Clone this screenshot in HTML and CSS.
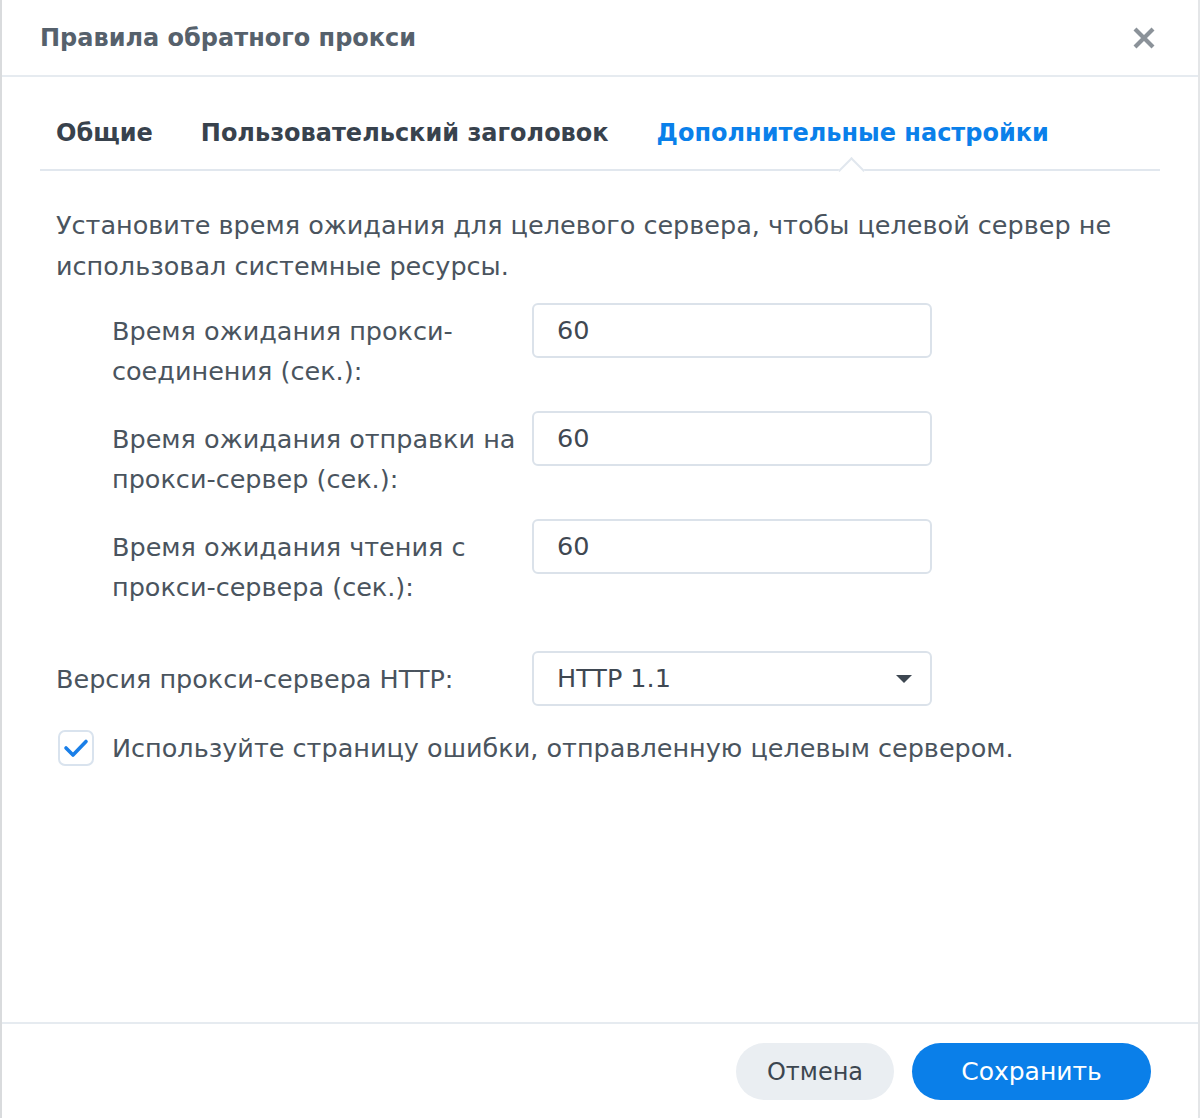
FILE: index.html
```html
<!DOCTYPE html>
<html lang="ru">
<head>
<meta charset="utf-8">
<title>Правила обратного прокси</title>
<link rel="stylesheet" href="styles.css">
</head>
<body>
<div class="dialog">
  <div class="header">
    <div class="title">Правила обратного прокси</div>
    <svg class="close" width="24" height="24" viewBox="0 0 24 24"><path d="M3 3 L21 21 M21 3 L3 21" stroke="#8b9299" stroke-width="4.2" stroke-linecap="butt"/></svg>
  </div>
  <div class="tabs">
    <div class="tab">Общие</div>
    <div class="tab">Пользовательский заголовок</div>
    <div class="tab active">Дополнительные настройки</div>
  </div>
  <div class="content">
    <p class="desc">Установите время ожидания для целевого сервера, чтобы целевой сервер не использовал системные ресурсы.</p>
    <div class="row sub">
      <div class="label">Время ожидания прокси-соединения (сек.):</div>
      <div class="field">60</div>
    </div>
    <div class="row sub">
      <div class="label">Время ожидания отправки на прокси-сервер (сек.):</div>
      <div class="field">60</div>
    </div>
    <div class="row sub">
      <div class="label">Время ожидания чтения с прокси-сервера (сек.):</div>
      <div class="field">60</div>
    </div>
    <div class="row top">
      <div class="label">Версия прокси-сервера HTTP:</div>
      <div class="field select">HTTP 1.1<span class="arrow"></span></div>
    </div>
    <div class="check-row">
      <span class="checkbox"><svg width="26" height="20" viewBox="0 0 26 20"><path d="M3 10 L10 17 L23 3.5" fill="none" stroke="#1a7fe8" stroke-width="3.6" stroke-linecap="round" stroke-linejoin="round"/></svg></span>
      <span class="check-label">Используйте страницу ошибки, отправленную целевым сервером.</span>
    </div>
  </div>
  <div class="footer">
    <button class="btn cancel">Отмена</button>
    <button class="btn save">Сохранить</button>
  </div>
</div>
</body>
</html>
```

FILE: styles.css
```css
html, body {
  margin: 0;
  padding: 0;
  background: #ffffff;
}

body {
  font-family: "DejaVu Sans", Verdana, sans-serif;
  color: #4a545e;
}

.dialog {
  box-sizing: border-box;
  width: 1200px;
  height: 1118px;
  border-left: 2px solid #d9dbdd;
  border-right: 2px solid #e4e6e8;
  display: flex;
  flex-direction: column;
}

.header {
  height: 75px;
  border-bottom: 2px solid #e6ebf0;
  display: flex;
  align-items: center;
  justify-content: space-between;
  padding: 0 42px 0 38px;
}

.title {
  font-size: 24px;
  font-weight: bold;
  color: #56616c;
}

.close {
  display: block;
  margin-top: 0;
}

.tabs {
  margin: 0 38px;
  height: 94px;
  border-bottom: 2px solid #e1e7ee;
  display: flex;
  align-items: center;
  gap: 48px;
  padding: 20px 16px 0 16px;
  box-sizing: border-box;
  position: relative;
}

.tab {
  font-size: 24px;
  font-weight: bold;
  color: #38424d;
}

.tab.active {
  color: #0a80ea;
  position: relative;
}

.tab.active::after {
  content: "";
  position: absolute;
  left: 185px;
  bottom: -33px;
  width: 17px;
  height: 17px;
  background: #ffffff;
  border-left: 2px solid #e1e7ee;
  border-top: 2px solid #e1e7ee;
  transform: rotate(45deg);
}

.content {
  flex: 1;
  padding: 34px 54px 0 54px;
}

.desc {
  margin: 0;
  font-size: 25.5px;
  line-height: 41px;
  color: #4a545e;
}

.row {
  display: grid;
  grid-template-columns: 476px 400px;
  align-items: start;
}

.row.sub {
  margin-top: 20px;
}

.row.sub:first-of-type {
  margin-top: 16px;
}

.row.sub .label {
  padding-left: 56px;
  padding-top: 8px;
  padding-right: 8px;
}

.row.top {
  margin-top: 44px;
  align-items: center;
}

.label {
  font-size: 25.5px;
  line-height: 40px;
  color: #4a545e;
}

.field {
  box-sizing: border-box;
  height: 55px;
  border: 2px solid #dbe2ea;
  border-radius: 6px;
  padding-left: 23px;
  font-size: 25.5px;
  line-height: 51px;
  color: #3f4852;
  position: relative;
}

.select .arrow {
  position: absolute;
  right: 18px;
  top: 22px;
  width: 0;
  height: 0;
  border-left: 8px solid transparent;
  border-right: 8px solid transparent;
  border-top: 8px solid #3d4751;
}

.check-row {
  margin-top: 24px;
  display: flex;
  align-items: center;
  gap: 18px;
  padding-left: 2px;
}

.checkbox {
  box-sizing: border-box;
  width: 36px;
  height: 36px;
  border: 2px solid #d9e3ee;
  border-radius: 7px;
  display: flex;
  align-items: center;
  justify-content: center;
}

.checkbox svg {
  display: block;
}

.check-label {
  font-size: 25.5px;
  color: #4a545e;
}

.footer {
  height: 96px;
  border-top: 2px solid #e6ebf0;
  display: flex;
  justify-content: flex-end;
  align-items: flex-start;
  gap: 18px;
  padding: 19px 47px 0 0;
  box-sizing: border-box;
}

.btn {
  font-family: "DejaVu Sans", Verdana, sans-serif;
  font-size: 24px;
  height: 57px;
  border: none;
  border-radius: 29px;
  cursor: pointer;
}

.btn.cancel {
  width: 158px;
  background: #eaeef2;
  color: #3c4650;
}

.btn.save {
  width: 239px;
  background: #0a7fe9;
  color: #ffffff;
  font-size: 25px;
}
```
